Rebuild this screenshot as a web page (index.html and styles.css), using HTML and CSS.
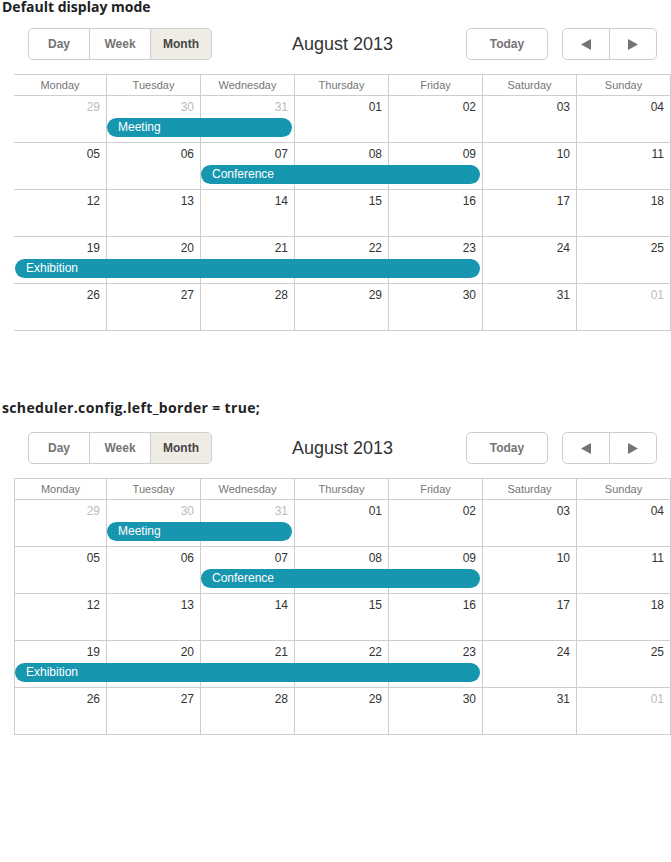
FILE: index.html
```html
<!DOCTYPE html>
<html>
<head>
<meta charset="utf-8">
<link rel="stylesheet" href="styles.css">
</head>
<body>
<div class="section">
  <div class="heading">Default display mode</div>
  <div class="scheduler">
    <div class="nav">
      <div class="tabs"><span class="tab">Day</span><span class="tab">Week</span><span class="tab active">Month</span></div>
      <div class="date">August 2013</div>
      <div class="nav-right">
        <span class="btn today">Today</span>
        <div class="arrows">
          <span class="arrow"><svg width="10" height="11" viewBox="0 0 10 11"><polygon points="0,5.5 10,0 10,11" fill="#747473"/></svg></span>
          <span class="arrow"><svg width="10" height="11" viewBox="0 0 10 11"><polygon points="10,5.5 0,0 0,11" fill="#747473"/></svg></span>
        </div>
      </div>
    </div>
    <div class="month">
      <div class="head"><div>Monday</div><div>Tuesday</div><div>Wednesday</div><div>Thursday</div><div>Friday</div><div>Saturday</div><div>Sunday</div></div>
      <div class="week">
        <div class="cell other">29</div><div class="cell other">30</div><div class="cell other">31</div><div class="cell">01</div><div class="cell">02</div><div class="cell">03</div><div class="cell">04</div>
        <div class="event c2-4">Meeting</div>
      </div>
      <div class="week">
        <div class="cell">05</div><div class="cell">06</div><div class="cell">07</div><div class="cell">08</div><div class="cell">09</div><div class="cell">10</div><div class="cell">11</div>
        <div class="event c3-6">Conference</div>
      </div>
      <div class="week">
        <div class="cell">12</div><div class="cell">13</div><div class="cell">14</div><div class="cell">15</div><div class="cell">16</div><div class="cell">17</div><div class="cell">18</div>
      </div>
      <div class="week">
        <div class="cell">19</div><div class="cell">20</div><div class="cell">21</div><div class="cell">22</div><div class="cell">23</div><div class="cell">24</div><div class="cell">25</div>
        <div class="event c1-6">Exhibition</div>
      </div>
      <div class="week">
        <div class="cell">26</div><div class="cell">27</div><div class="cell">28</div><div class="cell">29</div><div class="cell">30</div><div class="cell">31</div><div class="cell other">01</div>
      </div>
    </div>
  </div>
</div>

<div class="section">
  <div class="heading">scheduler.config.left_border = true;</div>
  <div class="scheduler">
    <div class="nav">
      <div class="tabs"><span class="tab">Day</span><span class="tab">Week</span><span class="tab active">Month</span></div>
      <div class="date">August 2013</div>
      <div class="nav-right">
        <span class="btn today">Today</span>
        <div class="arrows">
          <span class="arrow"><svg width="10" height="11" viewBox="0 0 10 11"><polygon points="0,5.5 10,0 10,11" fill="#747473"/></svg></span>
          <span class="arrow"><svg width="10" height="11" viewBox="0 0 10 11"><polygon points="10,5.5 0,0 0,11" fill="#747473"/></svg></span>
        </div>
      </div>
    </div>
    <div class="month left-border">
      <div class="head"><div>Monday</div><div>Tuesday</div><div>Wednesday</div><div>Thursday</div><div>Friday</div><div>Saturday</div><div>Sunday</div></div>
      <div class="week">
        <div class="cell other">29</div><div class="cell other">30</div><div class="cell other">31</div><div class="cell">01</div><div class="cell">02</div><div class="cell">03</div><div class="cell">04</div>
        <div class="event c2-4">Meeting</div>
      </div>
      <div class="week">
        <div class="cell">05</div><div class="cell">06</div><div class="cell">07</div><div class="cell">08</div><div class="cell">09</div><div class="cell">10</div><div class="cell">11</div>
        <div class="event c3-6">Conference</div>
      </div>
      <div class="week">
        <div class="cell">12</div><div class="cell">13</div><div class="cell">14</div><div class="cell">15</div><div class="cell">16</div><div class="cell">17</div><div class="cell">18</div>
      </div>
      <div class="week">
        <div class="cell">19</div><div class="cell">20</div><div class="cell">21</div><div class="cell">22</div><div class="cell">23</div><div class="cell">24</div><div class="cell">25</div>
        <div class="event c1-6">Exhibition</div>
      </div>
      <div class="week">
        <div class="cell">26</div><div class="cell">27</div><div class="cell">28</div><div class="cell">29</div><div class="cell">30</div><div class="cell">31</div><div class="cell other">01</div>
      </div>
    </div>
  </div>
</div>
</body>
</html>
```

FILE: styles.css
```css
* { box-sizing: border-box; }
html, body { margin: 0; padding: 0; background: #fff; }
body { font-family: "Liberation Sans", Arial, sans-serif; color: #333; }

.section + .section { margin-top: 70px; }

.heading {
  font-family: "Open Sans", "DejaVu Sans", sans-serif;
  font-weight: 700;
  font-size: 14px;
  line-height: 13px;
  color: #222;
  margin: 0 0 15px 2px;
}
.section + .section .heading { margin-bottom: 18px; letter-spacing: 0.35px; }

.scheduler { margin-left: 14px; width: 657px; }

.nav {
  display: grid;
  grid-template-columns: 1fr auto 1fr;
  align-items: center;
  padding: 0 14px;
  height: 32px;
  margin-bottom: 14px;
}
.tabs {
  justify-self: start;
  display: flex;
  border: 1px solid #cecece;
  border-radius: 5px;
  overflow: hidden;
  height: 32px;
}
.tab {
  width: 60px;
  text-align: center;
  font-weight: 700;
  font-size: 12px;
  line-height: 30px;
  color: #747473;
}
.tab + .tab { border-left: 1px solid #cecece; width: 61px; }
.tab.active { background: #efece6; color: #454544; }

.date {
  font-size: 18px;
  color: #333;
  text-align: center;
}
.nav-right {
  justify-self: end;
  display: flex;
  gap: 14px;
}
.btn {
  border: 1px solid #cecece;
  border-radius: 5px;
  height: 32px;
}
.today {
  width: 82px;
  text-align: center;
  font-weight: 700;
  font-size: 12px;
  line-height: 30px;
  color: #747473;
}
.arrows {
  display: flex;
  border: 1px solid #cecece;
  border-radius: 5px;
  height: 32px;
}
.arrow {
  width: 46px;
  display: flex;
  align-items: center;
  justify-content: center;
}
.arrow + .arrow { border-left: 1px solid #cecece; width: 47px; }

.month { border-right: 1px solid #cecece; }
.head, .week {
  display: grid;
  grid-template-columns: 92px repeat(6, 94px);
}
.head {
  border-top: 1px solid #cecece;
  border-bottom: 1px solid #cecece;
}
.head div {
  border-left: 1px solid #cecece;
  text-align: center;
  font-size: 11px;
  line-height: 20px;
  color: #767676;
}
.week {
  grid-template-rows: 46px;
  border-bottom: 1px solid #cecece;
}
.cell {
  grid-row: 1;
  border-left: 1px solid #cecece;
  text-align: right;
  padding: 4px 6px 0 0;
  font-size: 12px;
  line-height: 14px;
  color: #333;
}
.cell.other { color: #bbb; }
.month .head div:first-child,
.month .cell:nth-child(1) { border-left: none; }
.month.left-border .head div:first-child,
.month.left-border .cell:nth-child(1) { border-left: 1px solid #cecece; }

.cell:nth-child(1) { grid-column: 1; }
.cell:nth-child(2) { grid-column: 2; }
.cell:nth-child(3) { grid-column: 3; }
.cell:nth-child(4) { grid-column: 4; }
.cell:nth-child(5) { grid-column: 5; }
.cell:nth-child(6) { grid-column: 6; }
.cell:nth-child(7) { grid-column: 7; }

.event {
  grid-row: 1;
  align-self: start;
  margin: 22px 2px 0 1px;
  height: 19px;
  background: #1796b0;
  border-radius: 10px;
  color: #fff;
  font-size: 12px;
  line-height: 19px;
  padding-left: 11px;
  white-space: nowrap;
  position: relative;
  z-index: 1;
}
.c2-4 { grid-column: 2 / 4; }
.c3-6 { grid-column: 3 / 6; }
.c1-6 { grid-column: 1 / 6; }
```
